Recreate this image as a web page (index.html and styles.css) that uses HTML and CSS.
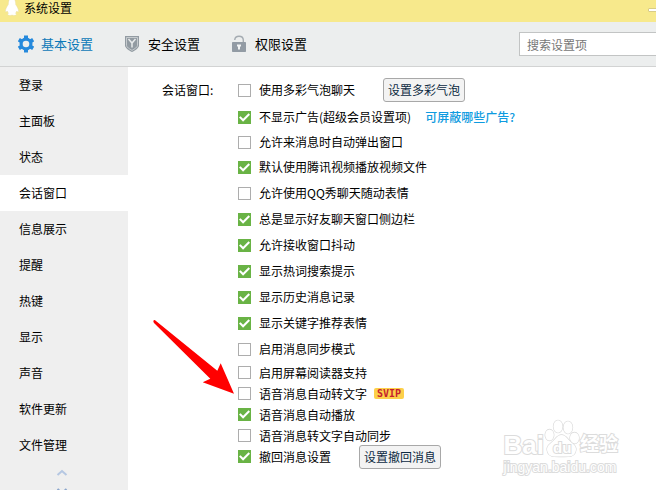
FILE: index.html
```
<!DOCTYPE html>
<html lang="zh-CN">
<head>
    <meta charset="UTF-8">
    <meta name="viewport" content="width=device-width, initial-scale=1.0">
    <title>系统设置</title>
    <link rel="stylesheet" href="styles.css">
</head>
<body>
    <header class="titlebar">
        <svg class="logo" width="14" height="16" viewBox="0 0 14 16">
            <path d="M7 -2C4 -2 3.300 1.500 3.300 4.500C2 6.500 0 9.500 .4 12C1 12.200 1.800 11.500 2.200 11C2.500 12 3 12.800 3.500 13.200C2 14 2.500 15.500 5 15.500C6 15.500 6.500 15.200 7 15C7.500 15.200 8 15.500 9 15.500C11.500 15.500 12 14 10.500 13.200C11 12.800 11.500 12 11.800 11C12.200 11.500 13 12.200 13.600 12C14 9.500 12 6.500 10.700 4.500C10.700 1.500 10 -2 7 -2Z" fill="#fff" stroke="#e9dda0" stroke-width=".5"/>
        </svg>
        <h1>系统设置</h1>
        <button class="minimize" aria-label="最小化"></button>
    </header>

    <div class="toolbar">
        <nav class="tabs">
            <a href="#basic" class="tab active">
                <svg width="16" height="18" viewBox="0 0 16 18">
                    <path d="M8 .5V17.500M.8 4.700L15.200 13.300M15.200 4.700L.8 13.300" stroke="#2589dc" stroke-width="4"/>
                    <circle cx="8" cy="9" r="6.500" fill="#2589dc"/>
                    <circle cx="8" cy="9" r="3.300" fill="#eceeee"/>
                </svg>
                基本设置
            </a>
            <a href="#security" class="tab">
                <svg width="16" height="18" viewBox="0 0 16 18">
                    <path d="M0 1H14V10.500C14 13 10 15.500 7 17C4 15.500 0 13 0 10.500Z" fill="#929ba2"/>
                    <path d="M1.500 2.500H12.500V10.300C12.500 12.300 9.500 14 7 15.400C4.500 14 1.500 12.300 1.500 10.300Z" fill="none" stroke="#d3d7d9" stroke-width=".8"/>
                    <path d="M3.500 4L7 8L10.500 4M7 8V12.500" fill="none" stroke="#e8ebec" stroke-width="1.500"/>
                </svg>
                安全设置
            </a>
            <a href="#permission" class="tab">
                <svg width="16" height="18" viewBox="0 0 16 18">
                    <path d="M2.800 5V4.500C3 2.500 4.500 1.200 7 1.200C9.500 1.200 11.200 2.500 11.300 5V8" fill="none" stroke="#a4abb1" stroke-width="1.400"/>
                    <rect x="0" y="7" width="14" height="10" rx=".7" fill="#929ba4"/>
                    <path d="M5 9.500H9V11.500H8V14.500H6V11.500H5Z" fill="#f2f4f4"/>
                </svg>
                权限设置
            </a>
        </nav>
        <input type="text" class="search" placeholder="搜索设置项" aria-label="搜索设置项">
    </div>

    <div class="main">
        <nav class="sidebar">
            <a href="#login">登录</a>
            <a href="#panel">主面板</a>
            <a href="#status">状态</a>
            <a href="#chat" class="selected">会话窗口</a>
            <a href="#info">信息展示</a>
            <a href="#remind">提醒</a>
            <a href="#hotkey">热键</a>
            <a href="#display">显示</a>
            <a href="#sound">声音</a>
            <a href="#update">软件更新</a>
            <a href="#files">文件管理</a>
            <div class="scroller">
                <svg width="12" height="22" viewBox="0 0 12 22">
                    <path d="M1.500 7L6 3L10.500 7" fill="none" stroke="#b5c7e2" stroke-width="2"/>
                    <path d="M1.500 21L6 25L10.500 21" fill="none" stroke="#8ba6cc" stroke-width="2"/>
                </svg>
            </div>
        </nav>

        <section class="content">
            <h2>会话窗口:</h2>
            <div class="options">
                <div class="row">
                    <label><input type="checkbox">使用多彩气泡聊天</label>
                    <button class="btn">设置多彩气泡</button>
                </div>
                <div class="row vip">
                    <label><input type="checkbox" checked>不显示广告(超级会员设置项)</label>
                    <a href="#ads" class="link">可屏蔽哪些广告?</a>
                </div>
                <div class="row popup"><label><input type="checkbox">允许来消息时自动弹出窗口</label></div>
                <div class="row"><label><input type="checkbox" checked>默认使用腾讯视频播放视频文件</label></div>
                <div class="row"><label><input type="checkbox">允许使用QQ秀聊天随动表情</label></div>
                <div class="row"><label><input type="checkbox" checked>总是显示好友聊天窗口侧边栏</label></div>
                <div class="row"><label><input type="checkbox" checked>允许接收窗口抖动</label></div>
                <div class="row"><label><input type="checkbox" checked>显示热词搜索提示</label></div>
                <div class="row"><label><input type="checkbox" checked>显示历史消息记录</label></div>
                <div class="row"><label><input type="checkbox" checked>显示关键字推荐表情</label></div>
                <div class="row"><label><input type="checkbox">启用消息同步模式</label></div>
                <div class="row compact"><label><input type="checkbox">启用屏幕阅读器支持</label></div>
                <div class="row compact">
                    <label><input type="checkbox">语音消息自动转文字</label>
                    <span class="badge">SVIP</span>
                </div>
                <div class="row compact"><label><input type="checkbox" checked>语音消息自动播放</label></div>
                <div class="row compact"><label><input type="checkbox">语音消息转文字自动同步</label></div>
                <div class="row compact">
                    <label><input type="checkbox" checked>撤回消息设置</label>
                    <button class="btn">设置撤回消息</button>
                </div>
            </div>
        </section>
    </div>

    <!-- pointer to the voice message option -->
    <svg class="arrow" width="84" height="78" viewBox="0 0 84 78">
        <path d="M3.500 3.500Q4.500 2.500 6 4L67.300 53.700L70.700 46.300L84 76.700L52.700 65.300L60.300 61.700L4 6Q3 4.500 3.500 3.500Z" fill="#f00"/>
    </svg>

    <div class="watermark">
        <div class="brand">
            <span>Bai</span>
            <span class="paw">
                <svg width="36" height="40" viewBox="0 0 36 40">
                    <g fill="#fff" stroke="#d8d8d8" stroke-width="1.300">
                        <ellipse cx="5.500" cy="17" rx="4.300" ry="5.500"/>
                        <ellipse cx="14" cy="8.500" rx="4.500" ry="6.200"/>
                        <ellipse cx="24" cy="9.500" rx="4.500" ry="6.200"/>
                        <ellipse cx="30.500" cy="20" rx="4.500" ry="5.500"/>
                        <path d="M17.500 17C13 17 11 22 7 25C3 28 2 31 4 35C6 39 10 38.500 17.500 38.500C25 38.500 29 39 31 35C33 31 32 28 28 25C24 22 22 17 17.500 17Z"/>
                    </g>
                </svg>
                <span class="du">du</span>
            </span>
            <span class="exp">经验</span>
        </div>
        <div class="site">jingyan.baidu.com</div>
    </div>
</body>
</html>
```
FILE: styles.css
```
* {
    box-sizing: border-box;
}
body {
    position: relative;
    display: flex;
    flex-direction: column;
    height: 100vh;
    margin: 0;
    overflow: hidden;
    background: #fff;
    color: #000;
    font-family: "Noto Sans CJK SC", sans-serif;
    font-size: 12px;
    line-height: 16px;
}
a {
    color: inherit;
    text-decoration: none;
}
h1, h2 {
    margin: 0;
    font-size: 12px;
    font-weight: normal;
}
input, button {
    margin: 0;
    font: inherit;
}
.titlebar {
    display: flex;
    flex: none;
    align-items: flex-start;
    gap: 5px;
    height: 22px;
    padding-left: 5px;
    background: #f7e98c;
}
.titlebar h1 {
    line-height: 16px;
}
.minimize {
    width: 12px;
    height: 4px;
    margin: 8px -4px 0 auto;
    padding: 0;
    border: 1px solid #d8cc86;
    border-radius: 1px;
    background: #fff;
}
.toolbar {
    display: flex;
    flex: none;
    align-items: center;
    justify-content: space-between;
    height: 45px;
    padding-left: 18px;
    border-bottom: 1px solid #d2d3d3;
    background: #eceeee;
}
.tabs {
    display: flex;
    gap: 32px;
}
.tab {
    display: flex;
    align-items: center;
    gap: 7px;
    font-size: 13px;
}
.tab.active {
    color: #0c78b8;
}
.search {
    width: 140px;
    height: 24px;
    margin-right: -3px;
    padding: 0 7px;
    border: 1px solid #c2c4c4;
    border-radius: 0;
    background: #fff;
}
.search::placeholder {
    color: #777;
    opacity: 1;
}
.main {
    display: flex;
    flex: 1;
    min-height: 0;
}
.sidebar {
    flex: none;
    width: 128px;
    overflow: hidden;
    background: #efefef;
}
.sidebar a {
    display: block;
    padding-left: 19px;
    line-height: 36px;
}
.sidebar .selected {
    background: #fff;
}
.scroller {
    display: flex;
    justify-content: center;
    padding-top: 5px;
    padding-right: 4px;
}
.content {
    display: flex;
    flex: 1;
    align-items: flex-start;
    padding: 10px 0 0 34px;
}
.content h2 {
    flex: none;
    width: 76px;
    line-height: 26px;
}
.row {
    display: flex;
    align-items: center;
    gap: 28px;
    height: 26px;
    white-space: nowrap;
}
.row label {
    display: flex;
    align-items: center;
    gap: 8px;
}
.row.vip {
    gap: 14px;
    margin-top: 1px;
}
.row.popup {
    height: 24px;
}
.row.compact {
    height: 21px;
}
.row input {
    position: relative;
    width: 13px;
    height: 13px;
    margin-top: 1px;
    appearance: none;
    border: 1px solid #adadad;
    background: #fff;
}
.compact input {
    margin-top: 0;
}
.row input:checked {
    border-color: #69b345;
    background: #69b345;
}
.row input:checked::after {
    content: "";
    position: absolute;
    inset: 0;
    background: #fff;
    clip-path: polygon(0 50%, 14% 38%, 37% 62%, 87% 12%, 100% 25%, 37% 88%);
}
.btn {
    height: 24px;
    padding: 0 4px;
    border: 1px solid #a8a8a8;
    border-radius: 3px;
    background: #f3f3f3;
    color: #0c2a42;
}
.link {
    color: #0e9be0;
    font-weight: 500;
}
.badge {
    height: 11px;
    margin-left: -21px;
    padding: 0 3px;
    border-radius: 2px;
    background: #fdd04a;
    color: #c51f2d;
    font: bold 10px/11px "DejaVu Sans Mono", monospace;
}
.arrow {
    position: absolute;
    top: 317px;
    left: 150px;
}
.watermark {
    position: absolute;
    right: 38px;
    bottom: 14px;
    color: #fff;
    font-family: "Liberation Sans", "Noto Sans CJK SC", sans-serif;
    -webkit-text-stroke: 2px #dcdcdc;
    paint-order: stroke fill;
    pointer-events: none;
}
.brand {
    display: flex;
    align-items: flex-end;
    height: 40px;
    font-size: 26px;
    font-weight: bold;
    line-height: 26px;
}
.paw {
    position: relative;
    height: 40px;
}
.du {
    position: absolute;
    bottom: 0;
    left: 9px;
    font-size: 15px;
    line-height: 20px;
}
.exp {
    font-size: 19px;
}
.site {
    font-size: 14px;
    line-height: 18px;
}
```
